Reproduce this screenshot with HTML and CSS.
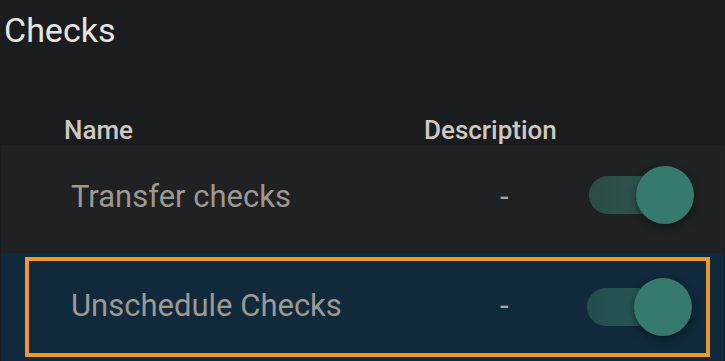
FILE: index.html
```html
<!DOCTYPE html>
<html>
<head>
  <meta charset="utf-8">
  <meta name="viewport" content="width=device-width">
  <title>Checks</title>
  <link rel="stylesheet" href="styles.css">
</head>
<body>
  <h1 class="page-title">Checks</h1>
  <div class="checks-table">
    <div class="table-head">
      <div class="head-cell">Name</div>
      <div class="head-cell">Description</div>
    </div>
    <div class="check-row first">
      <div class="check-inner">
        <div class="check-name">Transfer checks</div>
        <div class="check-desc">-</div>
        <div class="toggle">
          <div class="toggle-track"></div>
          <div class="toggle-knob"></div>
        </div>
      </div>
    </div>
    <div class="check-row selected">
      <div class="check-inner">
        <div class="check-name">Unschedule Checks</div>
        <div class="check-desc">-</div>
        <div class="toggle">
          <div class="toggle-track"></div>
          <div class="toggle-knob"></div>
        </div>
      </div>
    </div>
  </div>
</body>
</html>
```

FILE: styles.css
```css
*{
  box-sizing:border-box;
}
body{
  margin:0;
  background-color:#1b1c1e;
  font-family:Roboto, "Liberation Sans", sans-serif;
  height:100vh;
  overflow:hidden;
}
.page-title{
  margin:10px 0 0;
  padding-left:4px;
  font-size:34px;
  font-weight:400;
  line-height:40px;
  color:#e7e5e1;
}
.checks-table{
  margin:0 1px;
}
.table-head{
  display:grid;
  grid-template-columns:360px auto;
  padding:65px 0 0 63px;
  height:95px;
}
.head-cell{
  font-size:26px;
  font-weight:500;
  line-height:30px;
  color:#cdc9c2;
}
.check-row{
  height:108px;
  padding:4px 14px 4px 24px;
  background-color:#202123;
}
.check-row.selected{
  background-color:#10293b;
}
.check-inner{
  display:flex;
  align-items:center;
  height:100%;
  border:4px solid transparent;
}
.check-row.first .check-inner{
  padding-bottom:9px;
}
.check-row.selected .check-inner{
  border-color:#f0982f;
}
.check-name{
  width:471px;
  padding-left:42px;
  padding-bottom:2px;
  font-size:31px;
  line-height:36px;
  color:#9d9992;
}
.check-desc{
  flex:1;
  padding-bottom:2px;
  font-size:31px;
  line-height:36px;
  color:#aaa69f;
}
.check-row.first .check-name,
.check-row.first .check-desc{
  padding-bottom:0;
  padding-top:4px;
}
.toggle{
  position:relative;
  display:flex;
  align-items:center;
  width:105px;
  height:58px;
  margin-right:12px;
}
.check-row.selected .toggle{
  margin-right:14px;
}
.toggle-track{
  width:88px;
  height:38px;
  border-radius:19px;
  background:linear-gradient(90deg, #2b4c47 0%, #2e5750 100%);
}
.check-row.selected .toggle-track{
  background:linear-gradient(90deg, #224d4e 0%, #275a57 100%);
}
.toggle-knob{
  position:absolute;
  right:0;
  top:0;
  width:58px;
  height:58px;
  border-radius:50%;
  background-color:#367a6e;
  box-shadow:0 3px 8px rgba(0,0,0,0.45);
}
```
